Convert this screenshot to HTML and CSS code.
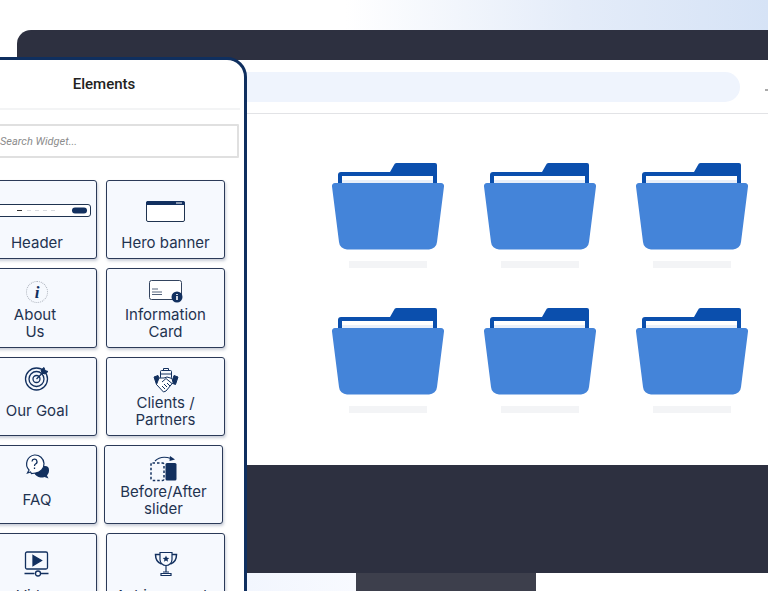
FILE: index.html
```html
<!DOCTYPE html>
<html lang="en">
	<head>
		<meta charset="utf-8" />
		<meta name="viewport" content="width=device-width, initial-scale=1.0" />
		<title>Elements</title>
		<link rel="stylesheet" href="styles.css">
	</head>

	<body>
		<svg class="defs" width="0" height="0" aria-hidden="true">
			<symbol id="folder" viewBox="0 0 112 87">
				<path fill="#0b4fad" d="M6 24V12a3 3 0 0 1 3-3H58l4-7a3 3 0 0 1 3-2H103a2 2 0 0 1 2 2V24z" />
				<path fill="#fff" d="M10 21V13H101V21z" />
				<path fill="#e9eff9" d="M10 17H101V21H10z" />
				<path fill="#4484d9" d="M3 20H109a3 3 0 0 1 3 3.500L105 79a8 8 0 0 1-8 7.500H15A8 8 0 0 1 7 79L0 23.500A3 3 0 0 1 3 20z" />
			</symbol>
		</svg>

		<div class="top-strip"></div>

		<div class="monitor">
			<div class="screen">
				<div class="toolbar">
					<div class="address"></div>
					<span class="tick"></span>
				</div>
				<div class="folders">
					<div class="folder"><svg width="112" height="87"><use href="#folder" /></svg><span></span></div>
					<div class="folder"><svg width="112" height="87"><use href="#folder" /></svg><span></span></div>
					<div class="folder"><svg width="112" height="87"><use href="#folder" /></svg><span></span></div>
					<div class="folder"><svg width="112" height="87"><use href="#folder" /></svg><span></span></div>
					<div class="folder"><svg width="112" height="87"><use href="#folder" /></svg><span></span></div>
					<div class="folder"><svg width="112" height="87"><use href="#folder" /></svg><span></span></div>
				</div>
			</div>
		</div>

		<div class="base"><div class="stand"></div></div>

		<aside class="panel">
			<h2 class="panel-title">Elements</h2>
			<input class="search" type="text" placeholder="Search Widget..." />

			<div class="cards">
				<div class="card card-low">
					<svg class="icon" width="120" height="26" viewBox="0 1 120 26">
						<rect x="-10" y="7.500" width="123.500" height="12" rx="2.500" fill="#fff" stroke="#1f3350" />
						<rect x="95" y="10.500" width="15" height="6" rx="3" fill="#12305f" />
						<path d="M40 13.500h5" stroke="#333" />
						<path d="M50 13.500h4M58 13.500h4M66 13.500h4M74 13.500h4" stroke="#d8dbe0" />
						<path d="M22 13.500h1" stroke="#333" />
					</svg>
					<p>Header</p>
				</div>
				<div class="card card-low">
					<svg class="icon" width="40" height="26" viewBox="0 1 40 26">
						<rect x="0.500" y="4.500" width="38" height="20" rx="1.500" fill="#fff" stroke="#1f3350" />
						<path d="M0 6a2 2 0 0 1 2-2h35a2 2 0 0 1 2 2v2H0z" fill="#12305f" />
						<path d="M30 6h6" stroke="#fff" />
					</svg>
					<p>Hero banner</p>
				</div>

				<div class="card">
					<div class="about-icon"><i>i</i></div>
					<p class="about-text">About<br />Us</p>
				</div>
				<div class="card">
					<svg class="icon" width="36" height="26" viewBox="0 0 36 26">
						<rect x="1.500" y="1.500" width="32" height="19" rx="2" fill="#fff" stroke="#33445f" />
						<path d="M4 10h6M4 13h10M4 15.500h10" stroke="#54647c" />
						<circle cx="29" cy="18" r="5.500" fill="#12305f" />
						<path d="M29 17v4M29 15v1" stroke="#fff" stroke-width="1.600" />
					</svg>
					<p>Information<br />Card</p>
				</div>

				<div class="card card-mid card-tight">
					<svg class="icon" width="26" height="26" viewBox="0 0 26 26" fill="none" stroke="#12305f">
						<circle cx="12.500" cy="13" r="11" stroke-width="1.300" />
						<circle cx="12.500" cy="13" r="7.500" stroke-width="1.300" />
						<circle cx="12.500" cy="13" r="3.500" stroke-width="1.300" />
						<path d="M12.500 13L21 4.500" stroke-width="1.300" />
						<path d="M20 1.500l1 3 3 1-3 2.500-3-1-1-3z" fill="#12305f" />
					</svg>
					<p>Our Goal</p>
				</div>
				<div class="card card-tight">
					<svg class="icon" width="26" height="26" viewBox="0 0 26 26" fill="none" stroke="#12305f">
						<rect x="7.500" y="2.500" width="11" height="8" rx="1" />
						<path d="M10.500 2.500V0.500h5v2M7.500 6h11" />
						<path d="M1 9l4-1.500 2.500 7.500-4 1.500zM25 9l-4-1.500-2.500 7.500 4 1.500z" fill="#12305f" />
						<path d="M6 10h5l3-1 5 1.500 1 4-7 8.500-2.500 1-7-7.500z" fill="#fff" />
						<path d="M9 14l4-3.500 6 5M9 18l3 3M11 16l3 3M14 15l3 3" />
					</svg>
					<p>Clients /<br />Partners</p>
				</div>

				<div class="card card-mid">
					<svg class="icon" width="26" height="26" viewBox="0 0 26 26">
						<path d="M9 12h12a4 4 0 0 1 4 4v1a6 6 0 0 1-2 4.500l1.500 3-4-1.500a8 8 0 0 1-11-8z" fill="#12305f" />
						<path d="M10.500 1a9 9 0 0 1 1 18l-4 .500-1-1.500-3 1 1.500-3A9 9 0 0 1 10.500 1z" fill="#fff" stroke="#12305f" stroke-width="1.200" />
						<path d="M8 7.500a2.500 2.500 0 1 1 3.500 2.500c-.7.400-1 .8-1 2M10.500 13.500v1.500" fill="none" stroke="#12305f" stroke-width="1.300" />
					</svg>
					<p>FAQ</p>
				</div>
				<div class="card card-shift">
					<svg class="icon" width="28" height="26" viewBox="0 0 28 26">
						<rect x="1" y="7" width="13" height="17.500" rx="1.500" fill="none" stroke="#12305f" stroke-width="1.500" stroke-dasharray="2.500 2" />
						<rect x="15.500" y="7" width="11" height="17.500" rx="1.500" fill="#12305f" />
						<path d="M5 5C9 1 15 0.500 21 2.500" fill="none" stroke="#12305f" stroke-width="1.200" />
						<path d="M20 0l5 3.500-5.500 1.500z" fill="#12305f" />
					</svg>
					<p>Before/After<br />slider</p>
				</div>

				<div class="card card-low">
					<svg class="icon" width="26" height="26" viewBox="0 0 26 26" fill="none" stroke="#12305f" stroke-width="1.300">
						<rect x="1.500" y="1" width="22" height="17" rx="1.500" />
						<path d="M9 4.500l8.500 5-8.500 5z" fill="#12305f" />
						<path d="M0.500 22.500h10M17 22.500h7.500" />
						<circle cx="14" cy="22.500" r="2.500" />
					</svg>
					<p>Video</p>
				</div>
				<div class="card card-low">
					<svg class="icon" width="24" height="26" viewBox="0 0 24 26" fill="none" stroke="#12305f" stroke-width="1.200">
						<path d="M6 1.500h12v7a6 6 0 0 1-12 0z" />
						<path d="M6 3.500H1.500c0 5 1.500 8 6 9.500M18 3.500h4.500c0 5-1.500 8-6 9.500" stroke-width="1.500" />
						<path d="M12 15v6M9 21h6M7 24.500v-2h10v2z" />
						<path d="M12 4.500l1 2.200 2.300.2-1.800 1.500.6 2.300-2.100-1.200-2.100 1.200.6-2.300-1.800-1.500 2.300-.2z" fill="#12305f" stroke="none" />
					</svg>
					<p>Achievements</p>
				</div>
			</div>
		</aside>
	</body>
</html>
```

FILE: styles.css
```css
html,
body {
	height: 100%;
}

body {
	margin: 0;
	overflow: hidden;
	position: relative;
	background: #fff;
	font-family: "Inter", sans-serif;
}

.defs {
	display: block;
	height: 0;
}

p,
h2 {
	margin: 0;
}

.top-strip {
	height: 30px;
	background: linear-gradient(90deg, #fff 45%, #e4ecf9 75%, #d6e3f6 100%);
}

.monitor {
	margin-left: 17px;
	padding: 30px 0 108px;
	background: #2d3040;
	border-radius: 14px 0 0 0;
}

.screen {
	height: 405px;
	background: #fff;
}

.toolbar {
	display: flex;
	align-items: center;
	height: 54px;
	padding: 0 0 0 200px;
	border-bottom: 1px solid #e2e3e6;
	box-sizing: border-box;
}

.address {
	width: 524px;
	height: 30px;
	margin-top: 1px;
	background: #eff4fd;
	border-radius: 15px;
}

.tick {
	width: 3px;
	height: 2px;
	margin: 6px 0 0 25px;
	background: #aaa;
}

.folders {
	display: grid;
	grid-template-columns: repeat(3, 112px);
	column-gap: 40px;
	row-gap: 40px;
	padding: 49px 0 0 315px;
}

.folder {
	height: 105px;
}

.folder svg {
	display: block;
}

.folder span {
	display: block;
	width: 78px;
	height: 7px;
	margin: 11px 0 0 17px;
	background: #f3f4f6;
}

.base {
	height: 18px;
	padding-left: 356px;
	background: linear-gradient(90deg, #f2f6fe 248px, #f8faff 356px, #fff 356px);
}

.stand {
	width: 180px;
	height: 100%;
	background: #3d3f4c;
}

/* panel lies over the monitor and runs off the left and bottom edge */
.panel {
	position: absolute;
	top: 57px;
	left: -30px;
	width: 267px;
	height: 600px;
	padding-left: 4px;
	overflow: hidden;
	background: #fff;
	border: 3px solid #0f2f5f;
	border-radius: 0 20px 0 0;
}

.panel-title {
	height: 48px;
	margin-left: -4px;
	margin-right: 4px;
	padding: 0 5px 0 0;
	border-bottom: 2px solid #f3f4f5;
	font-family: "Roboto", sans-serif;
	font-size: 15px;
	font-weight: 500;
	line-height: 49px;
	text-align: center;
	color: #222;
}

.search {
	display: block;
	width: 266px;
	height: 34px;
	margin: 14px 0 22px -4px;
	padding: 0 0 0 25px;
	box-sizing: border-box;
	border: 2px solid #e0e0e0;
	border-radius: 1px;
	outline: none;
	font-family: "Roboto", sans-serif;
	font-size: 11px;
	font-style: italic;
}

.search::placeholder {
	color: #8c8c8c;
	opacity: 1;
}

.cards {
	display: grid;
	grid-template-columns: 120px 119px;
	grid-auto-rows: 79.25px;
	column-gap: 9px;
	row-gap: 9px;
}

.card {
	display: flex;
	flex-direction: column;
	align-items: center;
	box-sizing: border-box;
	padding-top: 10px;
	background: #f6f9fe;
	border: 1px solid #2b3a58;
	border-radius: 3px;
	box-shadow: 1px 2px 3px rgba(40, 60, 100, 0.25);
	font-size: 15px;
	line-height: 17px;
	text-align: center;
	color: #1f3350;
}

.card p {
	margin-top: 1px;
}

.card-mid {
	padding-top: 8px;
}

.card-mid p {
	margin-top: 11px;
}

.card-low {
	padding-top: 17px;
}

.card-low p {
	margin-top: 10px;
}

.card.card-tight p {
	margin-top: 0;
}

.card-mid.card-tight p {
	margin-top: 10px;
}

.card-shift {
	margin-left: -2px;
	margin-right: 2px;
}

.icon {
	display: block;
	flex: none;
}

.about-icon {
	display: flex;
	align-items: center;
	justify-content: center;
	flex: none;
	width: 22px;
	height: 22px;
	margin-top: 2px;
	border: 1px dotted #aab0ba;
	border-radius: 50%;
	box-sizing: border-box;
	font-family: "Liberation Serif", serif;
	font-size: 17px;
	font-weight: bold;
	color: #12305f;
}

.card .about-text {
	margin-top: 3px;
	padding-right: 4px;
}
```
